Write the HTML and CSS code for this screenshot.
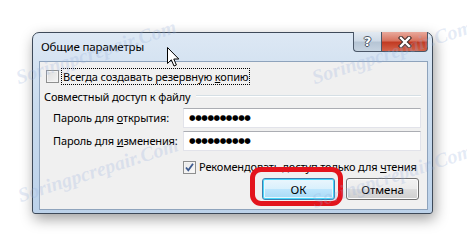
FILE: index.html
```html
<!DOCTYPE html>
<html lang="ru">
<head>
    <meta charset="UTF-8">
    <title>Общие параметры</title>
    <link rel="stylesheet" href="styles.css">
</head>
<body>
    <div class="stage">
        <div class="window">
            <div class="titlebar">
                <span class="title">Общие параметры</span>
                <div class="caption-buttons">
                    <button class="cap help">?</button>
                    <button class="cap close">
                        <svg width="14" height="12" viewBox="0 0 14 12">
                            <path d="M3 2 L11 10 M11 2 L3 10" stroke="#3b2a28" stroke-width="4.4" stroke-linecap="square"/>
                            <path d="M3 2 L11 10 M11 2 L3 10" stroke="#fff" stroke-width="2.4" stroke-linecap="square"/>
                        </svg>
                    </button>
                </div>
            </div>

            <div class="client">
                <div class="check-row backup">
                    <span class="checkbox"></span>
                    <span class="focus">Всегда создавать резервную <u>к</u>опию</span>
                </div>

                <div class="group-title">
                    <span>Совместный доступ к файлу</span>
                    <i class="rule"></i>
                </div>

                <div class="field">
                    <span class="field-label">Пароль для <u>о</u>ткрытия:</span>
                    <span class="input">●●●●●●●●●●</span>
                </div>
                <div class="field">
                    <span class="field-label">Пароль для <u>и</u>зменения:</span>
                    <span class="input">●●●●●●●●●●</span>
                </div>

                <div class="check-row readonly">
                    <span class="checkbox checked">
                        <svg width="11" height="11" viewBox="0 0 11 11">
                            <path d="M2 5.5 L4.3 8.3 L9 1.8" fill="none" stroke="#3d5a8f" stroke-width="1.8"/>
                        </svg>
                    </span>
                    <span class="check-text">Рекомендовать доступ только для <u>ч</u>тения</span>
                </div>

                <div class="buttons">
                    <span class="highlight"><button class="btn default">ОК</button></span>
                    <button class="btn">Отмена</button>
                </div>
            </div>
        </div>

        <span class="watermark wm-1">Soringpcrepair.Com</span>
        <span class="watermark wm-2">Soringpcrepair.Com</span>
        <span class="watermark wm-3">Soringpcrepair.Com</span>
        <span class="watermark wm-4">Soringpcrepair.Com</span>

        <svg class="cursor" width="13" height="20" viewBox="0 0 13 20">
            <path d="M0.5 0.5 L0.5 16.5 L4.3 12.8 L7 19 L9.4 18 L6.8 12 L11.8 12 Z" fill="#fff" stroke="#000" stroke-width="1"/>
        </svg>
    </div>
</body>
</html>
```

FILE: styles.css
```css
* {
    margin: 0;
    padding: 0;
    box-sizing: border-box;
}

body {
    background: #fff;
    font-family: "Noto Sans", "Liberation Sans", sans-serif;
    font-size: 11px;
    letter-spacing: -0.15px;
    color: #000;
}

.stage {
    position: relative;
    width: 467px;
    height: 248px;
    overflow: hidden;
    padding: 32px 0 0 32px;
}

.window {
    width: 401px;
    height: 182px;
    border: 1px solid #3e4a59;
    border-radius: 7px 7px 3px 3px;
    background: linear-gradient(to bottom, #dde8f4 0%, #c9dbee 40%, #bcd2ea 100%);
    box-shadow: 2px 5px 14px rgba(0, 0, 0, 0.38);
    padding: 0 4px 3px 6px;
    display: flex;
    flex-direction: column;
}

.titlebar {
    height: 28px;
    display: flex;
    align-items: flex-start;
}

.title {
    margin: 6px 0 0 2px;
    line-height: 16px;
    font-size: 11.5px;
    white-space: nowrap;
}

.caption-buttons {
    margin: -1px 0 0 auto;
    display: flex;
}

.cap {
    height: 20px;
    border: 1px solid #4b5768;
    border-top: none;
    font-family: "DejaVu Sans", sans-serif;
    display: flex;
    align-items: center;
    justify-content: center;
}

.help {
    width: 28px;
    border-right: none;
    border-radius: 0 0 0 4px;
    background: linear-gradient(to bottom, #e3eaf2 0%, #cfdae6 45%, #b6c5d5 55%, #c6d3e0 100%);
    color: #fff;
    font-size: 13px;
    font-weight: bold;
    text-shadow: -1px 0 #4a5566, 1px 0 #4a5566, 0 -1px #4a5566, 0 1px #4a5566;
}

.close {
    width: 47px;
    border-radius: 0 0 4px 0;
    background: linear-gradient(to bottom, #e9a99c 0%, #d7735f 45%, #c23b23 55%, #d3634a 100%);
}

.client {
    flex: 1;
    background: #f0f0f0;
    border: 1px solid #8ea3bc;
    display: flex;
    flex-direction: column;
}

.check-row {
    display: flex;
    align-items: center;
    white-space: nowrap;
}

.checkbox {
    flex-shrink: 0;
    width: 13px;
    height: 13px;
    border: 1px solid #8e8f8f;
    background: linear-gradient(135deg, #dcdcdc 0%, #f4f4f4 100%);
    box-shadow: inset 0 0 0 1px #f4f4f4;
    display: flex;
    align-items: center;
    justify-content: center;
}

.backup {
    margin: 6px 0 0 6px;
    height: 17px;
}

.focus {
    margin-left: 2px;
    border: 1px dotted #000;
    padding: 0 1px;
    line-height: 15px;
}

.group-title {
    margin: 4px 6px 0 4px;
    height: 16px;
    display: flex;
    align-items: center;
    line-height: 16px;
    white-space: nowrap;
}

.rule {
    flex: 1;
    margin: -3px 0 0 5px;
    border-top: 1px solid #d5dfe5;
    border-bottom: 1px solid #fff;
}

.field {
    margin: 3px 6px 0 13px;
    display: flex;
    align-items: center;
}

.field-label {
    line-height: 16px;
    white-space: nowrap;
}

.input {
    flex-shrink: 0;
    margin-left: auto;
    width: 238px;
    height: 20px;
    background: #fff;
    border: 1px solid #e2e3ea;
    border-top-color: #abadb3;
    padding-left: 5px;
    font-family: "DejaVu Sans", sans-serif;
    font-size: 7.5px;
    letter-spacing: -0.4px;
    line-height: 18px;
}

.readonly {
    margin: 8px 0 0 143px;
    height: 16px;
}

.checked {
    background: linear-gradient(135deg, #e8e8e8 0%, #fafafa 100%);
}

.check-text {
    margin-left: 3px;
    line-height: 16px;
}

.buttons {
    margin: 3px 8px 0 0;
    display: flex;
    justify-content: flex-end;
    gap: 11px;
}

.btn {
    width: 73px;
    height: 22px;
    border: 1px solid #707070;
    border-radius: 3px;
    background: linear-gradient(to bottom, #f2f2f2 0%, #ebebeb 50%, #dddddd 51%, #cfcfcf 100%);
    box-shadow: inset 0 0 0 1px #fcfcfc;
    font-family: "Noto Sans", "Liberation Sans", sans-serif;
    font-size: 11.5px;
    color: #000;
}

.btn.default {
    border-color: #3c7fb1;
    background: linear-gradient(to bottom, #eaf6fd 0%, #d9f0fc 50%, #bee6fd 51%, #a7d9f5 100%);
    box-shadow: inset 0 0 0 1px #48d8fb, inset 0 0 0 2px #e6f6fd;
}

.highlight {
    position: relative;
    display: flex;
}

.highlight::after {
    content: "";
    position: absolute;
    top: -11px;
    left: -12px;
    right: -8px;
    bottom: -6px;
    border: 5px solid #e3141c;
    border-radius: 11px;
}

.watermark {
    position: absolute;
    font-family: "Liberation Serif", serif;
    font-style: italic;
    font-weight: bold;
    font-size: 20px;
    letter-spacing: 0;
    color: rgba(150, 175, 220, 0.25);
    transform: rotate(-18deg);
    transform-origin: left bottom;
    white-space: nowrap;
    pointer-events: none;
}

.wm-1 { left: 20px; top: 66px; }
.wm-2 { left: 22px; top: 184px; }
.wm-3 { left: 316px; top: 66px; }
.wm-4 { left: 316px; top: 190px; }

.cursor {
    position: absolute;
    left: 167px;
    top: 47px;
}
```
